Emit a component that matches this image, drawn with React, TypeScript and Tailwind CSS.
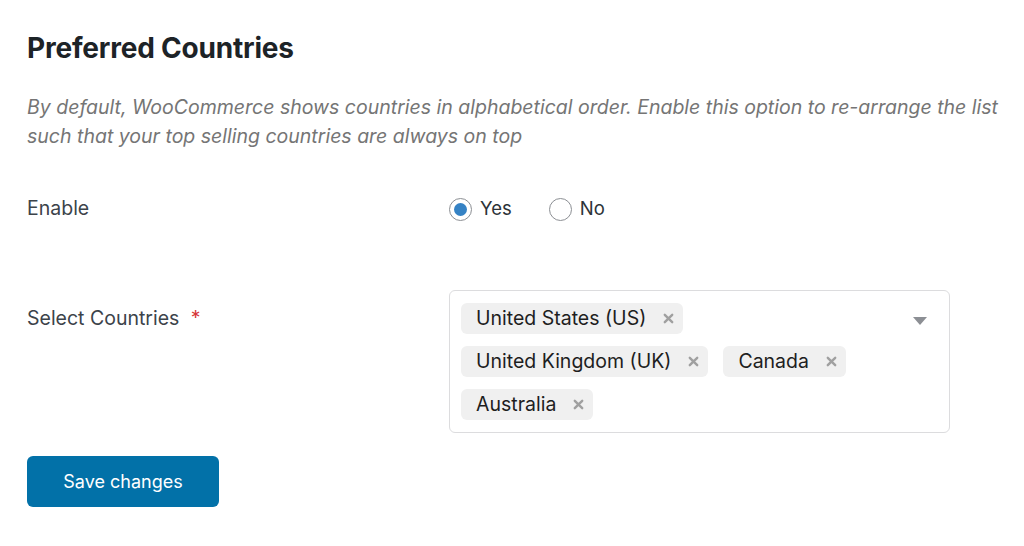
import React, { useState } from 'react';

const countries = ['United States (US)', 'United Kingdom (UK)', 'Canada', 'Australia'];

const Chip = ({ label, onRemove }: { label: string; onRemove: () => void }) => (
  <span className="inline-flex items-center h-[31px] pl-[15px] pr-[9px] rounded-[6px] bg-[#f0f0f0] text-[19.5px] text-[#1e1e1e]">
    {label}
    <button onClick={onRemove} className="ml-[17px] text-[#a0a0a0] leading-none">
      <svg width="11" height="11" viewBox="0 0 11 11">
        <path d="M1.8 1.8 L9.2 9.2 M9.2 1.8 L1.8 9.2" stroke="currentColor" strokeWidth="2.4" strokeLinecap="round" />
      </svg>
    </button>
  </span>
);

export default function App() {
  const [enabled, setEnabled] = useState(true);
  const [selected, setSelected] = useState(countries);

  return (
    <div className="min-h-[546px] bg-white pl-[27px] pt-[29px] font-['Inter','Liberation_Sans',Arial,sans-serif]">
      <h1 className="text-[28px] font-bold text-[#1d2327] leading-[38px] tracking-[-0.2px]">Preferred Countries</h1>
      <p className="mt-[26px] w-[985px] text-[19.5px] italic text-[#757575] leading-[29px]">
        By default, WooCommerce shows countries in alphabetical order. Enable this option to re-arrange the list such that your top selling countries are always on top
      </p>

      <div className="grid grid-cols-[422px_501px] mt-[43px]">
        <div className="text-[19.5px] text-[#3c434a] h-[30px] flex items-center">Enable</div>
        <div className="flex items-center gap-[37px] h-[30px]">
          {[true, false].map(v => (
            <label key={String(v)} className="flex items-center gap-[8px] text-[18.5px] text-[#2c3338] cursor-pointer">
              <span
                onClick={() => setEnabled(v)}
                className="w-[23px] h-[23px] rounded-full border border-[#8c8f94] flex items-center justify-center bg-white"
              >
                {enabled === v && <span className="w-[13px] h-[13px] rounded-full bg-[#3582c4]" />}
              </span>
              {v ? 'Yes' : 'No'}
            </label>
          ))}
        </div>

        <div className="mt-[66px] pt-[15px] text-[19.5px] leading-[26px] text-[#3c434a]">
          Select Countries <span className="ml-[6px] text-[#d63638]">*</span>
        </div>
        <div className="mt-[66px] relative border border-[#dcdcde] rounded-[6px] px-[11px] pt-[12px] pb-[11px] h-[143px]">
          <div className="flex flex-wrap gap-x-[15px] gap-y-[12px] w-[420px]">
            {selected.map(c => (
              <Chip key={c} label={c} onRemove={() => setSelected(selected.filter(s => s !== c))} />
            ))}
          </div>
          <svg className="absolute right-[22px] top-[26px]" width="14" height="8" viewBox="0 0 14 8">
            <path d="M0 0 H14 L7 8 Z" fill="#8c8f94" />
          </svg>
        </div>
      </div>

      <button className="mt-[23px] w-[192px] h-[51px] rounded-[6px] bg-[#0271a8] text-white text-[18px]">
        Save changes
      </button>
    </div>
  );
}
